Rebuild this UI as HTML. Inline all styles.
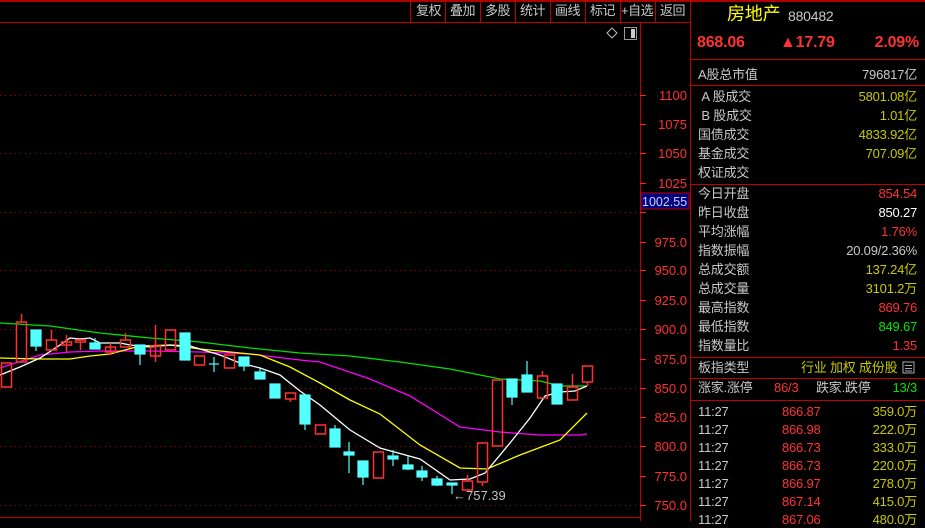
<!DOCTYPE html>
<html><head><meta charset="utf-8"><style>
body{margin:0;width:925px;height:521px;background:#000;overflow:hidden;position:relative;font-family:"Liberation Sans","Noto Sans CJK SC",sans-serif;}
.a{position:absolute;white-space:nowrap;font-size:13px;line-height:16px;letter-spacing:-0.2px}
.l{left:698px;color:#c8c8c8;}
.r{right:8px;text-align:right;}
.g{color:#c8c8c8}.rd{color:#ff3232}.y{color:#c8c800}.gr{color:#00e600}.w{color:#fff}
.tb{position:absolute;top:3px;font-size:13px;color:#c8c8c8;line-height:16px;letter-spacing:-0.5px}
</style></head><body>
<svg width="925" height="521" style="position:absolute;left:0;top:0">
<rect x="0" y="0" width="925" height="2" fill="#b00000"/>
<line x1="0" y1="22.5" x2="690" y2="22.5" stroke="#c00000"/>
<g stroke="#c00000">
<line x1="410.5" y1="2" x2="410.5" y2="22"/><line x1="445.5" y1="2" x2="445.5" y2="22"/><line x1="480.5" y1="2" x2="480.5" y2="22"/><line x1="515.5" y1="2" x2="515.5" y2="22"/><line x1="550.5" y1="2" x2="550.5" y2="22"/><line x1="585.5" y1="2" x2="585.5" y2="22"/><line x1="620.5" y1="2" x2="620.5" y2="22"/><line x1="655.5" y1="2" x2="655.5" y2="22"/>
<line x1="640.5" y1="22" x2="640.5" y2="521"/>
<line x1="690.5" y1="2" x2="690.5" y2="521"/>
<line x1="0" y1="517.5" x2="640" y2="517.5"/>
<line x1="691" y1="59.5" x2="925" y2="59.5"/>
<line x1="691" y1="85.5" x2="925" y2="85.5"/>
<line x1="691" y1="184.5" x2="925" y2="184.5"/>
<line x1="691" y1="357.5" x2="925" y2="357.5"/>
<line x1="691" y1="378.5" x2="925" y2="378.5"/>
<line x1="691" y1="400.5" x2="925" y2="400.5"/>
</g>
<g stroke="#b00000" stroke-dasharray="1,4">
<line x1="0" y1="95.5" x2="640" y2="95.5"/><line x1="0" y1="153.5" x2="640" y2="153.5"/><line x1="0" y1="212.5" x2="640" y2="212.5"/><line x1="0" y1="270.5" x2="640" y2="270.5"/><line x1="0" y1="329.5" x2="640" y2="329.5"/><line x1="0" y1="388.5" x2="640" y2="388.5"/><line x1="0" y1="446.5" x2="640" y2="446.5"/><line x1="0" y1="505.5" x2="640" y2="505.5"/>
</g>
<g stroke="#ff2020">
<line x1="640" y1="95.5" x2="646" y2="95.5"/><line x1="640" y1="124.5" x2="646" y2="124.5"/><line x1="640" y1="153.5" x2="646" y2="153.5"/><line x1="640" y1="183.5" x2="646" y2="183.5"/><line x1="640" y1="212.5" x2="646" y2="212.5"/><line x1="640" y1="242.5" x2="646" y2="242.5"/><line x1="640" y1="270.5" x2="646" y2="270.5"/><line x1="640" y1="300.5" x2="646" y2="300.5"/><line x1="640" y1="329.5" x2="646" y2="329.5"/><line x1="640" y1="359.5" x2="646" y2="359.5"/><line x1="640" y1="388.5" x2="646" y2="388.5"/><line x1="640" y1="417.5" x2="646" y2="417.5"/><line x1="640" y1="446.5" x2="646" y2="446.5"/><line x1="640" y1="476.5" x2="646" y2="476.5"/><line x1="640" y1="505.5" x2="646" y2="505.5"/>
</g>
<g font-size="13" fill="#ff3030" text-anchor="end" font-family="Liberation Sans">
<text x="687" y="100">1100</text><text x="687" y="129">1075</text><text x="687" y="158">1050</text><text x="687" y="188">1025</text><text x="687" y="247">975.0</text><text x="687" y="275">950.0</text><text x="687" y="305">925.0</text><text x="687" y="334">900.0</text><text x="687" y="364">875.0</text><text x="687" y="393">850.0</text><text x="687" y="422">825.0</text><text x="687" y="451">800.0</text><text x="687" y="481">775.0</text><text x="687" y="510">750.0</text>
</g>
<rect x="641" y="193" width="48" height="16" fill="#000080" stroke="#c00000"/>
<text x="642" y="206" font-size="12.5" fill="#d0d0ff" font-family="Liberation Sans">1002.55</text>
<path d="M612 28 L617 33 L612 38 L607 33Z" fill="none" stroke="#bbb"/>
<rect x="624.5" y="27.5" width="12" height="12" fill="none" stroke="#999"/><rect x="631" y="29" width="4" height="9" fill="#ccc"/>
<polyline fill="none" stroke="#00e000" stroke-width="1.3" points="0,323 50,326 100,333 150,338 200,342 250,348 300,353 350,356 400,362 450,369 500,379 540,381 560,386 587,386"/>
<polyline fill="none" stroke="#ff00ff" stroke-width="1.3" points="0,368 40,355 70,352 100,351 150,351 200,352 250,354 300,360 320,362 370,379 410,396 460,427 500,432 540,435 580,435 587,434"/>
<polyline fill="none" stroke="#ffff00" stroke-width="1.3" points="0,358 40,359 70,359 90,356 110,354 140,346 170,345 200,349 230,352 260,355 290,367 320,383 350,400 380,414 420,445 460,468 487,469 520,455 560,440 587,413"/>
<polyline fill="none" stroke="#fff" stroke-width="1.3" points="0,375 20,367 40,358 60,345 70,338 80,339 90,338 100,343 120,343 130,345 150,347 170,345 190,346 200,349 220,355 240,363 260,368 280,375 300,391 320,405 350,430 380,448 420,459 450,480 470,479 485,473 510,443 530,418 545,396 560,392 575,391 587,386"/>
<g stroke="#ff3232" fill="none" stroke-width="1.5">
<rect x="1.5" y="363" width="10" height="24"/>
<line x1="21.5" y1="314" x2="21.5" y2="322"/><rect x="16.5" y="322" width="10" height="40"/>
<rect x="46.5" y="340" width="10" height="10"/><line x1="51.5" y1="330" x2="51.5" y2="340"/>
<rect x="61.5" y="342" width="10" height="3"/><line x1="66.5" y1="335" x2="66.5" y2="352"/>
<rect x="75.5" y="340" width="10" height="2"/><line x1="80.5" y1="342" x2="80.5" y2="350"/>
<rect x="105.5" y="347" width="10" height="5"/><line x1="110.5" y1="343" x2="110.5" y2="355"/>
<rect x="120.5" y="340" width="10" height="7"/><line x1="125.5" y1="333" x2="125.5" y2="340"/>
<rect x="150.5" y="346" width="10" height="10"/><line x1="155.5" y1="325" x2="155.5" y2="362"/>
<rect x="165.5" y="330" width="10" height="20"/>
<rect x="194.5" y="356" width="10" height="9"/>
<rect x="224.5" y="355" width="10" height="13"/>
<rect x="285.5" y="393" width="10" height="6"/><line x1="290.5" y1="399" x2="290.5" y2="402"/>
<rect x="315.5" y="425" width="10" height="9"/>
<rect x="373.5" y="452" width="10" height="26"/>
<rect x="462.5" y="481" width="10" height="9"/><line x1="467.5" y1="475" x2="467.5" y2="481"/>
<rect x="477.5" y="443" width="10" height="39"/><line x1="482.5" y1="482" x2="482.5" y2="486"/>
<rect x="492.5" y="380" width="10" height="66"/>
<rect x="537.5" y="376" width="10" height="22"/><line x1="542.5" y1="371" x2="542.5" y2="376"/>
<rect x="567.5" y="387" width="10" height="13"/><line x1="572.5" y1="374" x2="572.5" y2="387"/>
<rect x="582.5" y="366" width="10" height="16"/><line x1="587.5" y1="382" x2="587.5" y2="386"/>
</g>
<g fill="#54ffff" stroke="#54ffff" stroke-width="1.2">
<rect x="31" y="330" width="10" height="16"/><line x1="36" y1="346" x2="36" y2="351"/>
<rect x="90" y="343" width="10" height="6"/><line x1="95" y1="338" x2="95" y2="343"/>
<rect x="135" y="345" width="10" height="9"/><line x1="140" y1="354" x2="140" y2="365"/>
<rect x="180" y="333" width="10" height="27"/>
<line x1="209" y1="364" x2="219" y2="364"/><line x1="214" y1="357" x2="214" y2="372"/>
<rect x="239" y="357" width="10" height="9"/><line x1="244" y1="366" x2="244" y2="371"/>
<rect x="255" y="372" width="10" height="7"/><line x1="260" y1="367" x2="260" y2="379"/>
<rect x="270" y="384" width="10" height="14"/>
<rect x="300" y="395" width="10" height="29"/><line x1="305" y1="424" x2="305" y2="430"/>
<rect x="330" y="429" width="10" height="18"/><line x1="335" y1="425" x2="335" y2="429"/>
<rect x="344" y="452" width="10" height="3"/><line x1="349" y1="442" x2="349" y2="473"/>
<rect x="358" y="461" width="10" height="16"/><line x1="363" y1="477" x2="363" y2="485"/>
<rect x="388" y="456" width="10" height="3"/><line x1="393" y1="450" x2="393" y2="466"/>
<rect x="403" y="465" width="10" height="4"/><line x1="408" y1="456" x2="408" y2="470"/>
<rect x="417" y="471" width="10" height="6"/><line x1="422" y1="466" x2="422" y2="481"/>
<rect x="432" y="479" width="10" height="6"/><line x1="437" y1="476" x2="437" y2="486"/>
<rect x="447" y="483" width="10" height="2"/><line x1="452" y1="485" x2="452" y2="494"/>
<rect x="507" y="379" width="10" height="18"/><line x1="512" y1="397" x2="512" y2="405"/>
<rect x="522" y="375" width="10" height="17"/><line x1="527" y1="361" x2="527" y2="375"/>
<rect x="552" y="384" width="10" height="20"/>
</g>
<text x="453" y="500" font-size="13" fill="#c0c0c0" font-family="Liberation Sans">←757.39</text>
<rect x="903" y="362" width="11" height="11" fill="none" stroke="#aaa"/>
<line x1="905" y1="365.5" x2="912" y2="365.5" stroke="#aaa"/><line x1="905" y1="368.5" x2="912" y2="368.5" stroke="#aaa"/><line x1="905" y1="371" x2="912" y2="371" stroke="#aaa"/>
</svg>
<div class="tb" style="left:416px">复权</div><div class="tb" style="left:450px">叠加</div><div class="tb" style="left:485px">多股</div><div class="tb" style="left:520px">统计</div><div class="tb" style="left:555px">画线</div><div class="tb" style="left:590px">标记</div><div class="tb" style="left:621px">+自选</div><div class="tb" style="left:660px">返回</div>
<div class="a" style="left:727px;top:4px;font-size:18px;line-height:20px;color:#ffff00">房地产</div>
<div class="a" style="left:788px;top:8px;color:#c8c8c8;font-size:14px">880482</div>
<div class="a rd" style="left:697px;top:33px;font-size:16px;line-height:20px;font-weight:bold">868.06</div>
<div class="a rd" style="left:780px;top:33px;font-size:16px;line-height:20px;font-weight:bold">▲17.79</div>
<div class="a rd" style="right:6px;top:33px;font-size:16px;line-height:20px;font-weight:bold">2.09%</div>
<div class="a l" style="top:67px">A股总市值</div><div class="a r g" style="top:67px">796817亿</div>
<div class="a l" style="top:89px">&nbsp;A 股成交</div><div class="a r y" style="top:89px">5801.08亿</div>
<div class="a l" style="top:108px">&nbsp;B 股成交</div><div class="a r y" style="top:108px">1.01亿</div>
<div class="a l" style="top:127px">国债成交</div><div class="a r y" style="top:127px">4833.92亿</div>
<div class="a l" style="top:146px">基金成交</div><div class="a r y" style="top:146px">707.09亿</div>
<div class="a l" style="top:165px">权证成交</div>
<div class="a l" style="top:186px">今日开盘</div><div class="a r rd" style="top:186px">854.54</div>
<div class="a l" style="top:205px">昨日收盘</div><div class="a r w" style="top:205px">850.27</div>
<div class="a l" style="top:224px">平均涨幅</div><div class="a r rd" style="top:224px">1.76%</div>
<div class="a l" style="top:243px">指数振幅</div><div class="a r g" style="top:243px">20.09/2.36%</div>
<div class="a l" style="top:262px">总成交额</div><div class="a r y" style="top:262px">137.24亿</div>
<div class="a l" style="top:281px">总成交量</div><div class="a r y" style="top:281px">3101.2万</div>
<div class="a l" style="top:300px">最高指数</div><div class="a r rd" style="top:300px">869.76</div>
<div class="a l" style="top:319px">最低指数</div><div class="a r gr" style="top:319px">849.67</div>
<div class="a l" style="top:338px">指数量比</div><div class="a r rd" style="top:338px">1.35</div>
<div class="a l" style="top:360px">板指类型</div><div class="a y" style="left:801px;top:360px">行业 加权 成份股</div>
<div class="a l" style="top:380px">涨家.涨停</div><div class="a rd" style="left:774px;top:380px">86/3</div><div class="a g" style="left:816px;top:380px">跌家.跌停</div><div class="a r gr" style="top:380px">13/3</div>
<div class="a l" style="top:404px">11:27</div><div class="a rd" style="left:782px;top:404px">866.87</div><div class="a r y" style="top:404px">359.0万</div>
<div class="a l" style="top:422px">11:27</div><div class="a rd" style="left:782px;top:422px">866.98</div><div class="a r y" style="top:422px">222.0万</div>
<div class="a l" style="top:440px">11:27</div><div class="a rd" style="left:782px;top:440px">866.73</div><div class="a r y" style="top:440px">333.0万</div>
<div class="a l" style="top:458px">11:27</div><div class="a rd" style="left:782px;top:458px">866.73</div><div class="a r y" style="top:458px">220.0万</div>
<div class="a l" style="top:476px">11:27</div><div class="a rd" style="left:782px;top:476px">866.97</div><div class="a r y" style="top:476px">278.0万</div>
<div class="a l" style="top:494px">11:27</div><div class="a rd" style="left:782px;top:494px">867.14</div><div class="a r y" style="top:494px">415.0万</div>
<div class="a l" style="top:512px">11:27</div><div class="a rd" style="left:782px;top:512px">867.06</div><div class="a r y" style="top:512px">480.0万</div>
</body></html>
